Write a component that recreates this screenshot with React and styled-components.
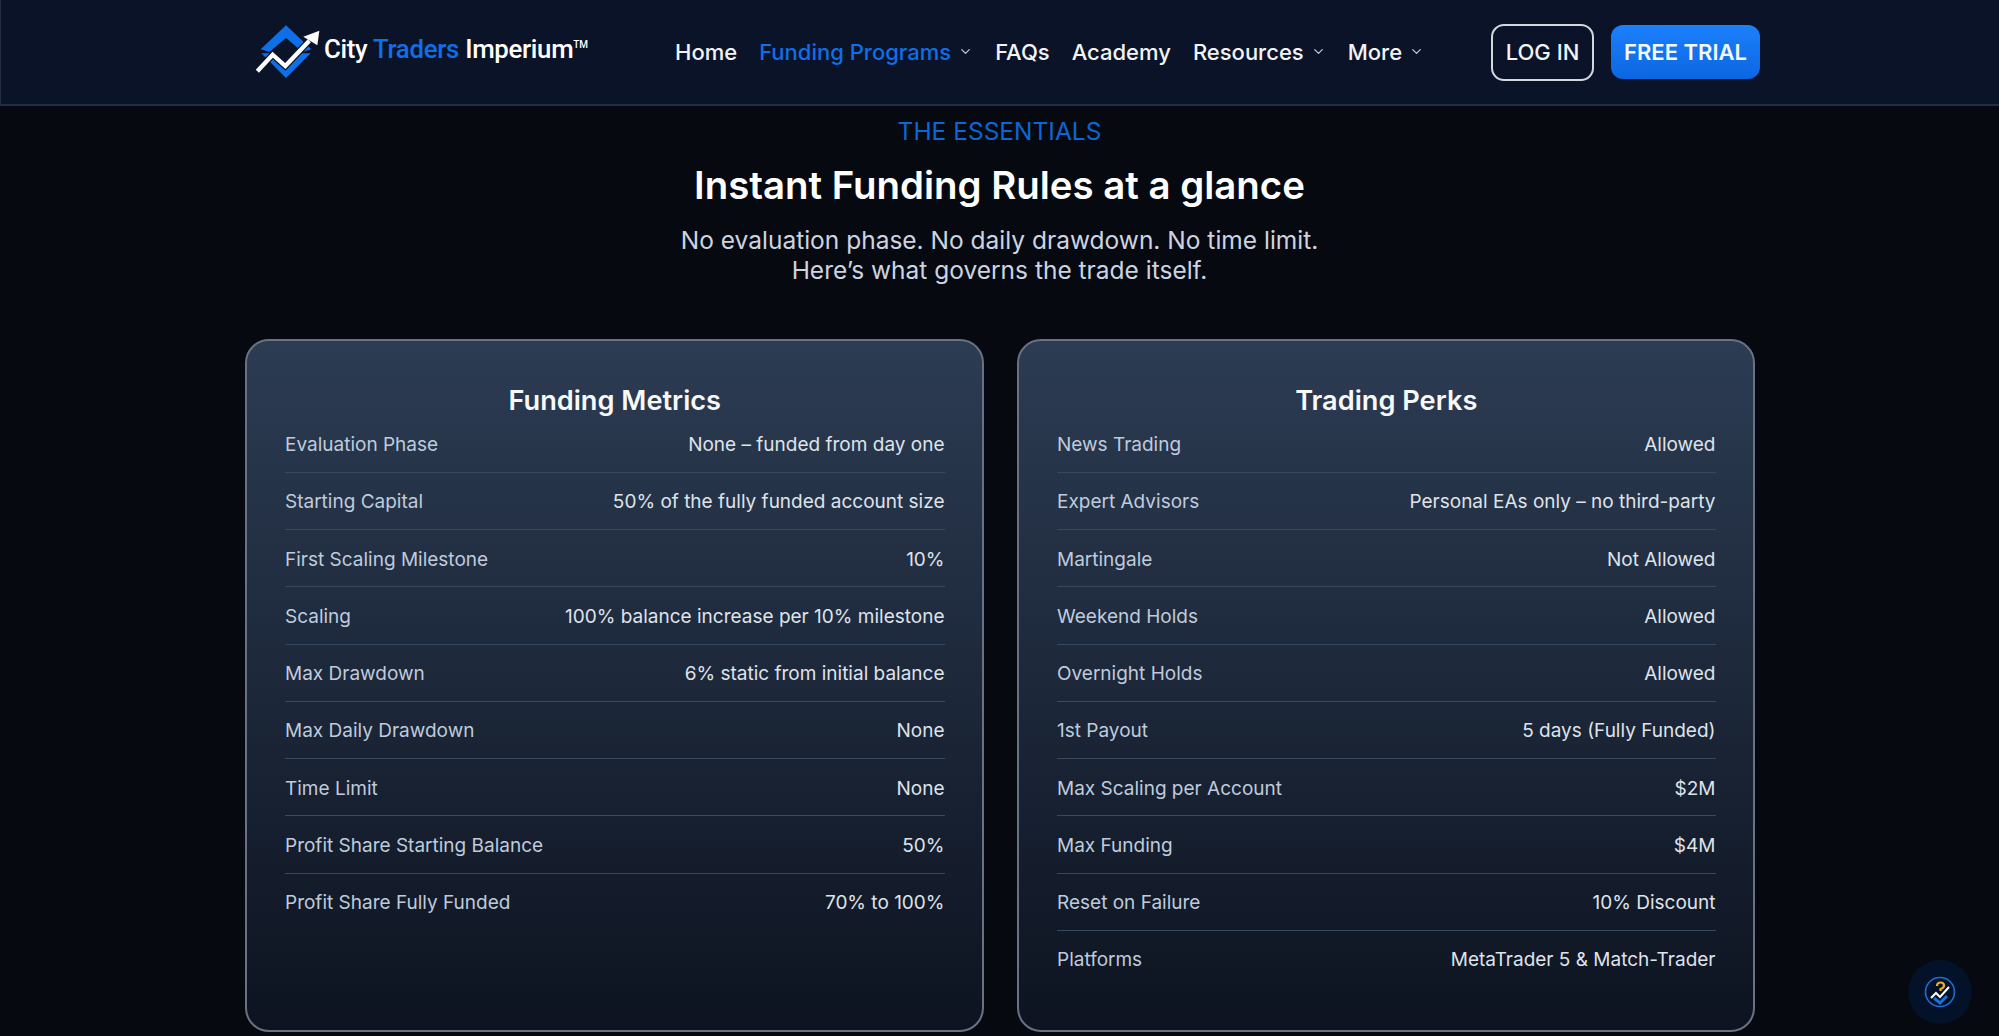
import React from 'react';
import styled, { createGlobalStyle } from 'styled-components';
import { ChevronDown } from 'lucide-react';

const Global = createGlobalStyle`
  html, body { margin: 0; padding: 0; height: 100%; overflow: hidden; background: #05070d; }
  body { font-family: Inter, "Liberation Sans", sans-serif; -webkit-font-smoothing: antialiased; }
  * { box-sizing: border-box; }
`;

const Page = styled.div`
  position: relative;
  height: 1036px;
  overflow: hidden;
  background: #070910;
`;

const Header = styled.header`
  height: 106px;
  display: flex;
  align-items: center;
  padding: 0 239px 0 253px;
  background: #0b1329;
  border-bottom: 2px solid #232f3f;
  border-left: 1px solid #232f3f;
`;

const Logo = styled.div`
  display: flex;
  align-items: center;
  width: 421px;
  flex: none;
`;

const LogoMark = styled.svg`
  width: 72px;
  height: 62px;
  flex: none;
  margin-right: -2px;
`;

const LogoText = styled.span`
  font-family: Roboto, "Liberation Sans", sans-serif;
  font-size: 25.8px;
  font-weight: 500;
  letter-spacing: -0.3px;
  color: #fff;
  white-space: nowrap;
  margin-top: -7px;
`;

const LogoAccent = styled.span`
  color: #0e6fe6;
`;

const Tm = styled.sup`
  font-size: 10px;
  vertical-align: 10px;
  line-height: 0;
`;

const Nav = styled.nav`
  display: flex;
  align-items: center;
  gap: 22px;
`;

const NavItem = styled.a`
  display: flex;
  align-items: center;
  gap: 7px;
  font-size: 22px;
  font-weight: 500;
  margin-top: -1px;
  color: ${p => (p.$active ? '#0e6fe6' : '#f2f3f6')};
  white-space: nowrap;
`;

const Caret = styled(ChevronDown)`
  color: #c4cad3;
`;

const Actions = styled.div`
  margin-left: auto;
  display: flex;
  align-items: center;
  gap: 17px;
`;

const OutlineButton = styled.button`
  width: 103px;
  height: 57px;
  border: 2px solid #d4d7dc;
  border-radius: 13px;
  background: transparent;
  color: #f2f4f7;
  font: 500 22px Inter, "Liberation Sans", sans-serif;
`;

const PrimaryButton = styled.button`
  width: 149px;
  height: 54px;
  border: 0;
  border-radius: 12px;
  background: linear-gradient(180deg, #1c80fb 0%, #0c66e2 100%);
  color: #f4f8ff;
  font: 600 22px Inter, "Liberation Sans", sans-serif;
`;

const Intro = styled.section`
  padding-top: 10px;
  text-align: center;
`;

const Eyebrow = styled.div`
  font-size: 24.5px;
  line-height: 30px;
  font-weight: 400;
  color: #0b66d8;
`;

const Heading = styled.h1`
  margin: 16px 0 0;
  font-size: 38.4px;
  line-height: 46px;
  font-weight: 600;
  color: #fff;
`;

const Sub = styled.p`
  margin: 16.5px 0 0;
  font-size: 24.5px;
  line-height: 30px;
  font-weight: 400;
  color: #ccd4e0;
`;

const Grid = styled.div`
  width: 1510px;
  margin: 54px auto 0;
  display: grid;
  grid-template-columns: 739px 738px;
  gap: 33px;
`;

const Card = styled.article`
  height: 693.5px;
  padding: 41px 37px 0 38.5px;
  border: 2px solid #687282;
  border-radius: 24px;
  background: linear-gradient(180deg, #2c3c53 0%, #0d1320 100%);
`;

const CardTitle = styled.h2`
  margin: 0;
  height: 38px;
  text-align: center;
  font-size: 27.2px;
  line-height: 38px;
  font-weight: 600;
  color: #f6f8fa;
`;

const Row = styled.div`
  height: 57.25px;
  display: flex;
  align-items: center;
  justify-content: space-between;
  padding-top: 2px;
  border-bottom: 1.5px solid ${p => (p.$last ? 'transparent' : '#38495f')};
  font-size: 19px;
  margin-top: ${p => (p.$first ? '-4px' : '0')};
`;

const Label = styled.span`
  color: #bfcbdc;
`;

const Value = styled.span`
  color: #dfe3ea;
`;

const HelpBubble = styled.div`
  position: absolute;
  left: 1908px;
  top: 960px;
  width: 64px;
  height: 64px;
  border-radius: 50%;
  background: #031228;
  display: flex;
  align-items: center;
  justify-content: center;
`;

const HelpMark = styled.svg`
  width: 32px;
  height: 32px;
`;

const metrics = [
  ['Evaluation Phase', 'None – funded from day one'],
  ['Starting Capital', '50% of the fully funded account size'],
  ['First Scaling Milestone', '10%'],
  ['Scaling', '100% balance increase per 10% milestone'],
  ['Max Drawdown', '6% static from initial balance'],
  ['Max Daily Drawdown', 'None'],
  ['Time Limit', 'None'],
  ['Profit Share Starting Balance', '50%'],
  ['Profit Share Fully Funded', '70% to 100%'],
];

const perks = [
  ['News Trading', 'Allowed'],
  ['Expert Advisors', 'Personal EAs only – no third-party'],
  ['Martingale', 'Not Allowed'],
  ['Weekend Holds', 'Allowed'],
  ['Overnight Holds', 'Allowed'],
  ['1st Payout', '5 days (Fully Funded)'],
  ['Max Scaling per Account', '$2M'],
  ['Max Funding', '$4M'],
  ['Reset on Failure', '10% Discount'],
  ['Platforms', 'MetaTrader 5 & Match-Trader'],
];

function RulesCard({ title, rows }) {
  return (
    <Card>
      <CardTitle>{title}</CardTitle>
      {rows.map(([k, v], i) => (
        <Row key={k} $first={i === 0} $last={i === rows.length - 1}>
          <Label>{k}</Label>
          <Value>{v}</Value>
        </Row>
      ))}
    </Card>
  );
}

function Mark() {
  return (
    <LogoMark viewBox="30 15 216 186">
      <path d="M126 28 L202 100 L176 108 L126 66 L76 108 L50 100 Z" fill="#0e6fe6" />
      <path d="M52 112 L88 112 L126 150 L164 112 L200 112 L126 186 Z" fill="#0e6fe6" />
      <path d="M40 166 L86 116 L124 150 L196 74" fill="none" stroke="#0b1329" strokeWidth="20" />
      <path d="M40 166 L86 116 L124 150 L196 74" fill="none" stroke="#fff" strokeWidth="13" />
      <path d="M226 44 L220 88 L178 62 Z" fill="#fff" />
    </LogoMark>
  );
}

export default function App() {
  return (
    <Page>
      <Global />
      <Header>
        <Logo>
          <Mark />
          <LogoText>
            City <LogoAccent>Traders</LogoAccent> Imperium<Tm>TM</Tm>
          </LogoText>
        </Logo>
        <Nav>
          <NavItem>Home</NavItem>
          <NavItem $active>Funding Programs <Caret size={15} /></NavItem>
          <NavItem>FAQs</NavItem>
          <NavItem>Academy</NavItem>
          <NavItem>Resources <Caret size={15} /></NavItem>
          <NavItem>More <Caret size={15} /></NavItem>
        </Nav>
        <Actions>
          <OutlineButton>LOG IN</OutlineButton>
          <PrimaryButton>FREE TRIAL</PrimaryButton>
        </Actions>
      </Header>
      <Intro>
        <Eyebrow>THE ESSENTIALS</Eyebrow>
        <Heading>Instant Funding Rules at a glance</Heading>
        <Sub>
          No evaluation phase. No daily drawdown. No time limit.
          <br />
          Here’s what governs the trade itself.
        </Sub>
      </Intro>
      <Grid>
        <RulesCard title="Funding Metrics" rows={metrics} />
        <RulesCard title="Trading Perks" rows={perks} />
      </Grid>
      <HelpBubble>
        <HelpMark viewBox="0 0 32 32">
          <circle cx="16" cy="16" r="14.5" fill="none" stroke="#1c6fd6" strokeWidth="1.6" />
          <path d="M10 22 L16 27 L23 20" fill="none" stroke="#1c6fd6" strokeWidth="3" />
          <path d="M13 10 Q13 6.5 16.5 6.5 Q20 6.5 20 9.5 Q20 12 16.5 13 L16.5 15" fill="none" stroke="#e8b026" strokeWidth="2.2" />
          <path d="M7 22 L12 17 L16 21 L25 11" fill="none" stroke="#fff" strokeWidth="2" />
        </HelpMark>
      </HelpBubble>
    </Page>
  );
}
